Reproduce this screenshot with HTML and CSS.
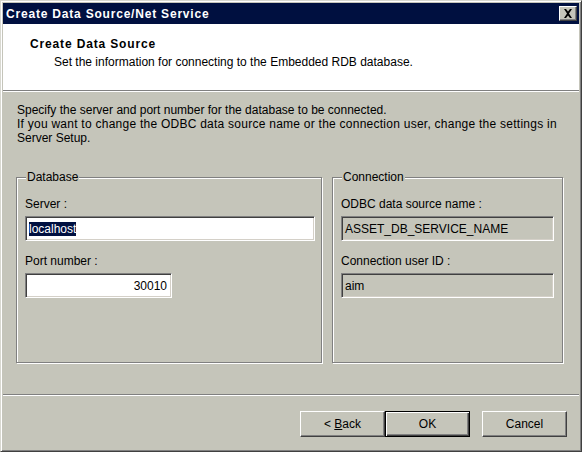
FILE: index.html
```html
<!DOCTYPE html>
<html>
<head>
<meta charset="utf-8">
<title>Create Data Source/Net Service</title>
<link rel="stylesheet" href="styles.css">
</head>
<body>
<div class="window">
  <div class="titlebar">
    <span class="title">Create Data Source/Net Service</span>
    <span class="close-btn">
      <svg width="10" height="9" viewBox="0 0 10 9"><path d="M1 0h2l2 2.5L7 0h2L6 4.5 9 9H7L5 6.5 3 9H1l3-4.5z" fill="#000"/></svg>
    </span>
  </div>
  <div class="header">
    <div class="heading">Create Data Source</div>
    <div class="subtitle">Set the information for connecting to the Embedded RDB database.</div>
  </div>
  <div class="content">
    <p class="intro">Specify the server and port number for the database to be connected.<br><span class="wide">If you want to change the ODBC data source name or the connection user, change the settings in</span><br>Server Setup.</p>
    <div class="groups">
      <fieldset class="group group-db">
        <legend>Database</legend>
        <div class="label">Server :</div>
        <div class="edit edit-server"><span class="sel">localhost</span></div>
        <div class="label label2">Port number :</div>
        <div class="edit edit-port">30010</div>
      </fieldset>
      <fieldset class="group group-conn">
        <legend>Connection</legend>
        <div class="label">ODBC data source name :</div>
        <div class="edit readonly">ASSET_DB_SERVICE_NAME</div>
        <div class="label label2">Connection user ID :</div>
        <div class="edit readonly">aim</div>
      </fieldset>
    </div>
  </div>
  <div class="separator"></div>
  <div class="footer">
    <div class="btn"><span>&lt;&nbsp;<u>B</u>ack</span></div>
    <div class="btn default"><span>OK</span></div>
    <div class="btn cancel"><span>Cancel</span></div>
  </div>
</div>
</body>
</html>
```

FILE: styles.css
```css
html, body {
  margin: 0;
  padding: 0;
}
body {
  width: 582px;
  height: 452px;
  overflow: hidden;
  font-family: "Liberation Sans", Arial, sans-serif;
  font-size: 12px;
  color: #000;
  background: #c5c5ba;
}
.window {
  box-sizing: border-box;
  width: 582px;
  height: 452px;
  background: #c5c5ba;
  border-top: 1px solid #d8d8d0;
  border-left: 1px solid #d8d8d0;
  border-right: 1px solid #404040;
  border-bottom: 1px solid #404040;
  box-shadow: inset 1px 1px 0 #fff, inset -1px -1px 0 #808080;
  padding: 2px;
  display: flex;
  flex-direction: column;
}
.titlebar {
  height: 21px;
  background: #001040;
  color: #fff;
  display: flex;
  align-items: center;
  justify-content: space-between;
  padding: 0 2px 0 3px;
}
.title {
  font-weight: bold;
  font-size: 12px;
  letter-spacing: 0.8px;
}
.close-btn {
  box-sizing: border-box;
  width: 18px;
  height: 15px;
  background: #c5c5ba;
  border-top: 1px solid #fff;
  border-left: 1px solid #fff;
  border-right: 1px solid #404040;
  border-bottom: 1px solid #404040;
  box-shadow: inset -1px -1px 0 #808080;
  display: flex;
  align-items: center;
  justify-content: center;
}
.close-btn svg {
  display: block;
  margin-left: -1px;
}
.header {
  height: 67px;
  background: #fff;
  box-sizing: border-box;
  padding: 13px 0 0 27px;
  border-bottom: 1px solid #808080;
  box-shadow: 0 1px 0 #fff;
}
.heading {
  font-weight: bold;
  line-height: 14px;
  letter-spacing: 0.85px;
}
.subtitle {
  padding-left: 24px;
  margin-top: 4px;
  line-height: 14px;
}
.content {
  height: 302px;
  box-sizing: border-box;
  padding: 11px 10px 0 13px;
  margin-top: 1px;
}
.intro {
  margin: 0 0 0 1px;
  line-height: 14px;
  white-space: nowrap;
}
.intro .wide {
  letter-spacing: 0.25px;
}
.groups {
  display: flex;
  gap: 10px;
  margin-top: 25px;
}
.group {
  margin: 0;
  padding: 13px 0 0 8px;
  height: 193px;
  box-sizing: border-box;
  border: 1px solid #808080;
  box-shadow: inset 1px 1px 0 #fff, 1px 1px 0 #fff;
  min-width: 0;
}
.group legend {
  padding: 0 1px;
  margin-left: 1px;
  line-height: 14px;
  background: #c5c5ba;
}
.group-db {
  width: 306px;
}
.group-conn {
  width: 231px;
}
.label {
  line-height: 14px;
}
.label2 {
  margin-top: 13px;
}
.edit {
  box-sizing: border-box;
  height: 25px;
  margin-top: 5px;
  background: #fff;
  border-top: 1px solid #808080;
  border-left: 1px solid #808080;
  border-right: 1px solid #fff;
  border-bottom: 1px solid #fff;
  box-shadow: inset 1px 1px 0 #404040, inset -1px -1px 0 #d4d0c8;
  padding: 0 3px;
  display: flex;
  align-items: center;
  line-height: 14px;
}
.edit-server {
  width: 290px;
}
.edit-port {
  width: 147px;
  justify-content: flex-end;
  padding-right: 4px;
}
.sel {
  background: #001040;
  color: #fff;
}
.readonly {
  background: #c5c5ba;
  width: 213px;
}
.separator {
  height: 1px;
  background: #808080;
  box-shadow: 0 1px 0 #fff;
  margin-bottom: 1px;
}
.footer {
  flex: 1;
  display: flex;
  align-items: flex-start;
  padding: 15px 0 0 297px;
}
.btn {
  box-sizing: border-box;
  width: 85px;
  height: 26px;
  background: #c5c5ba;
  border-top: 1px solid #fff;
  border-left: 1px solid #fff;
  border-right: 1px solid #404040;
  border-bottom: 1px solid #404040;
  box-shadow: inset -1px -1px 0 #808080;
  display: flex;
  align-items: center;
  justify-content: center;
}
.btn.default {
  border: 1px solid #000;
  box-shadow: inset 1px 1px 0 #fff, inset -1px -1px 0 #404040, inset -2px -2px 0 #808080;
}
.btn.cancel {
  margin-left: 12px;
}
```
